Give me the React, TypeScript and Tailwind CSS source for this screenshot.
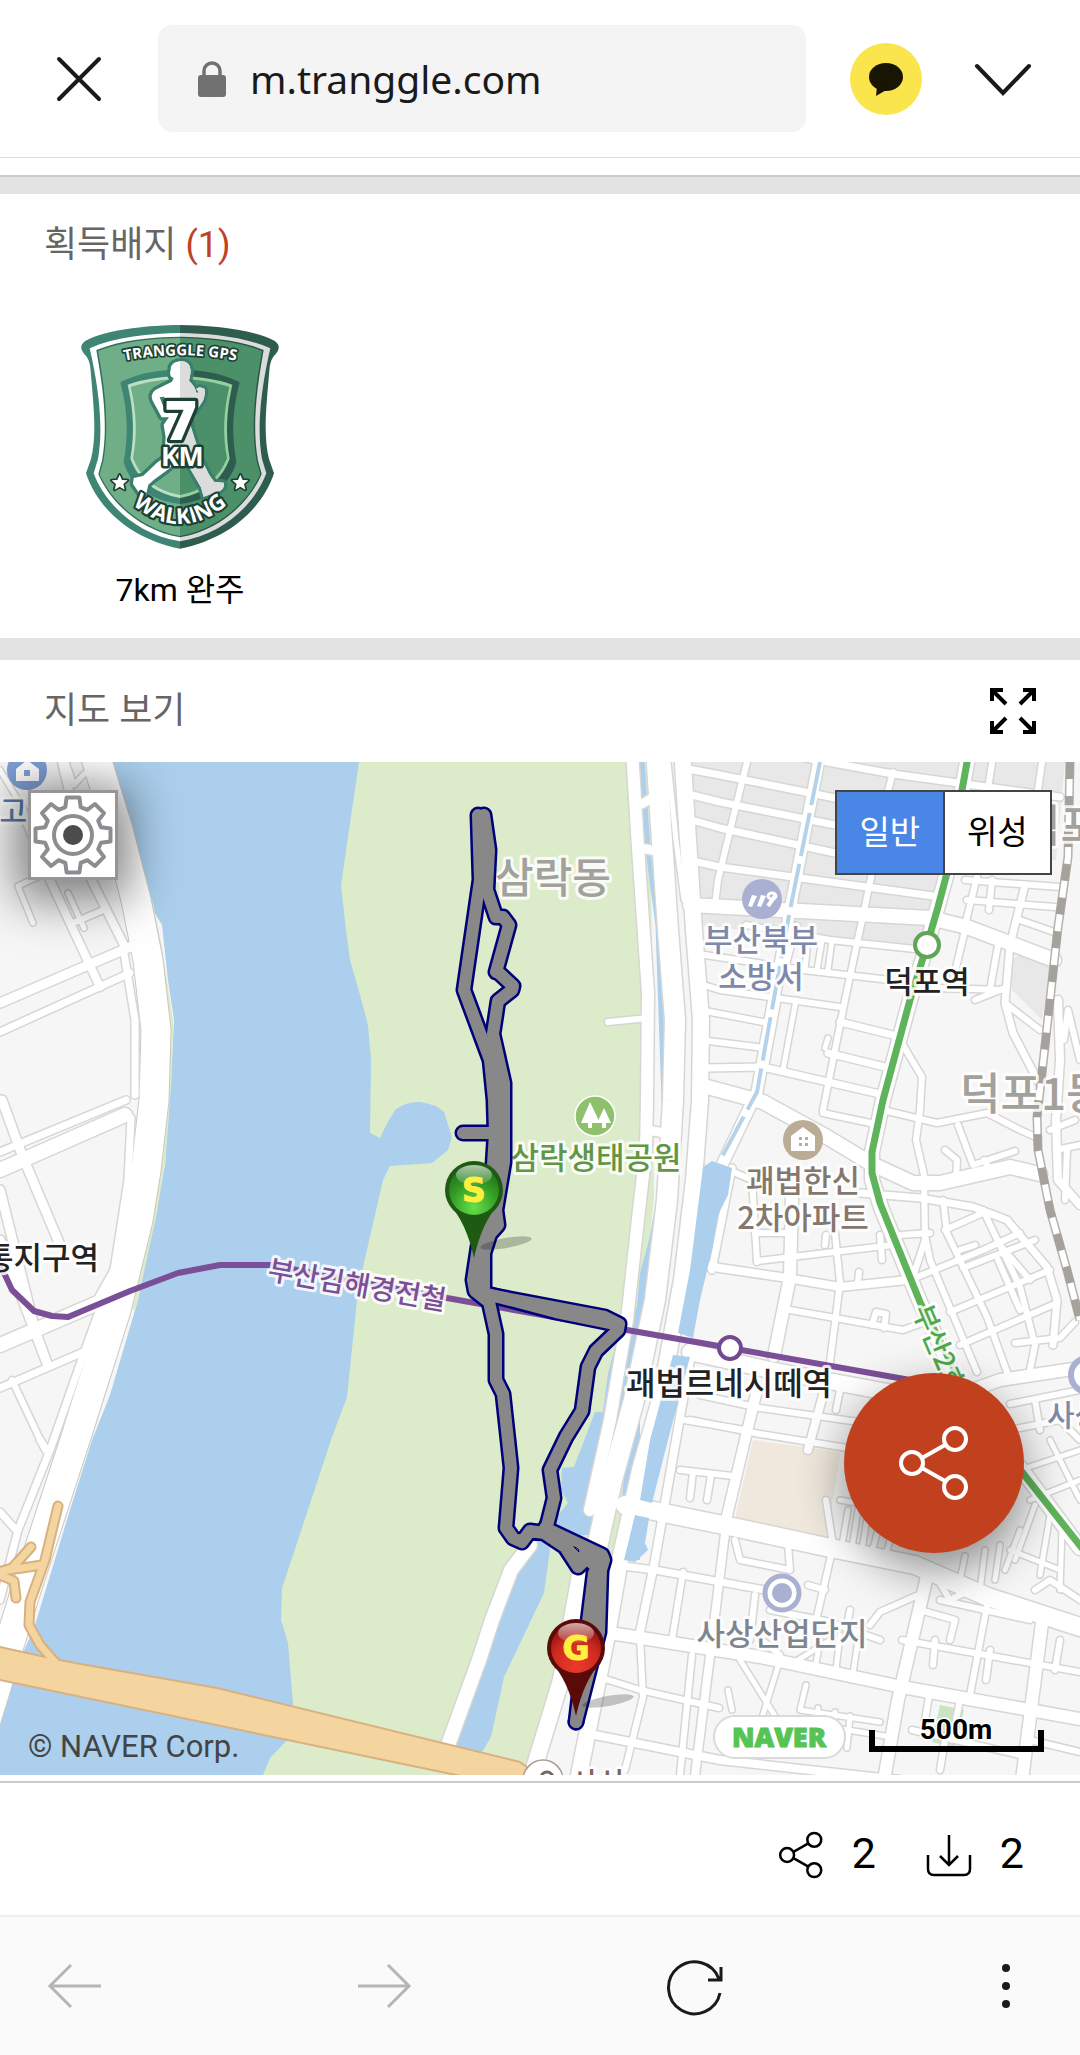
import React from "react";

const KR = "Roboto, 'Noto Sans CJK KR', sans-serif";
const MAP_FONT = "'Noto Sans CJK KR', sans-serif";

type Road = [number, string];

const ROADS: Road[] = [
  // west bank
  [9, "M0 1003L130 947"],
  [7, "M0 1032L130 973"],
  [8, "M22 810L50 880L100 987"],
  [7, "M123 947L135 1020L135 1095"],
  [6, "M73 923L103 910"],
  [8, "M62 762L90 877L123 943"],
  [5, "M33 923L18 886L46 873"],
  [5, "M68 893L84 928M66 762L74 785L84 774M0 770L24 810"],
  [14, "M0 1170L125 1115"],
  [7, "M0 1152L126 1100"],
  [9, "M2 1100L22 1155L60 1245"],
  [9, "M0 1190L35 1330L48 1366L0 1240"],
  [14, "M0 1345L100 1302L118 1270"],
  [7, "M0 1388L88 1350"],
  [6, "M12 1380L45 1450"],
  [7, "M131 1118L128 1180L114 1270L85 1350L50 1450L18 1530L0 1600"],
  [7, "M0 1512L16 1530M40 1440L48 1452"],
  // expressways along the river park
  [12, "M632 750L638 848L648 993L647 1100L646 1150L639 1210L627 1320L610 1420L590 1510"],
  [20, "M656 750L668 930L675 1020L673 1100L667 1200L655 1300L634 1400L612 1480L592 1570L578 1620"],
  [16, "M682 750L694 930L701 1020L700 1100L694 1180L682 1280L660 1400L640 1470L620 1560L606 1640L578 1780"],
  [5, "M668 762L676 840L684 900"],
  [14, "M530 1545L511 1570L492 1620L479 1660L447 1748"],
  [16, "M580 1575L561 1680L532 1775"],
  [6, "M608 1022L648 1018"],
  [9, "M642 804L652 798M640 848L662 852M648 1130L664 1133"],
  // northern blocks
  [7, "M688 769L720 775L835 798"],
  [7, "M800 757L893 774L1060 797"],
  [7, "M692 795L720 802L835 825"],
  [7, "M695 821L720 828L835 853"],
  [7, "M697 862L720 867L933 896"],
  [14, "M690 905L800 911L930 918L967 927L1054 960"],
  [6, "M746 925L830 940L915 949"],
  [6, "M705 955L803 970L890 980"],
  [6, "M700 984L720 990L840 1007"],
  [6, "M700 1010L768 1023"],
  [7, "M840 1022L897 1036"],
  [6, "M700 1040L765 1048"],
  [7, "M828 1053L889 1068"],
  [7, "M705 1068L763 1067L880 1094"],
  [6, "M747 762L735 810L718 880L715 905"],
  [11, "M820 755L790 910L757 1092L722 1165"],
  [6, "M893 772L887 795M872 873L845 1000L823 1110"],
  [14, "M968 757L947 873L927 945L910 1000L883 1100L872 1152L872 1180L882 1210L920 1302L970 1410L1022 1470L1080 1548"],
  [6, "M993 757L987 795M1042 762L1037 797"],
  [6, "M977 877L965 925M992 880L989 910M965 930L953 980M998 945L990 990"],
  [7, "M1025 885L1010 945L1005 1003L1013 1033L1040 1085"],
  [6, "M965 880L1060 887M967 900L1055 907M1020 920L1054 932M935 988L1005 990M975 1000L1005 988M1005 1003L1040 1030"],
  [6, "M900 1040L922 1077L920 1110L916 1140L924 1175L925 1240L912 1280"],
  [5, "M797 925L785 970M808 940L805 970M822 940L817 970M832 940L828 970M778 1000L765 1070M796 1000L783 1070M828 1038L825 1048"],
  [14, "M700 1085L763 1102L827 1137L870 1163L913 1183L940 1183L1010 1167L1040 1174"],
  [6, "M823 1113L875 1124M887 1111L937 1123L987 1113L1020 1130L1038 1138"],
  [6, "M958 1125L973 1165L1015 1151M945 1150L957 1160L956 1178M990 1170L984 1160"],
  [8, "M1058 1000L1060 1060L1056 1120L1058 1180L1080 1205"],
  [6, "M1064 1040L1068 1010L1080 1060M1056 1150L1080 1145M1065 1200L1067 1150M1050 1130L1075 1120"],
  // middle blocks
  [8, "M690 1262L720 1268L787 1278L840 1287L907 1280"],
  [12, "M792 1197L790 1277L774 1356"],
  [7, "M732 1168L712 1270"],
  [6, "M752 1180L757 1262M835 1233L840 1283L830 1362"],
  [6, "M757 1261L893 1245M755 1233L792 1233M722 1167L752 1180"],
  [6, "M790 1310L903 1330L922 1323M872 1325L876 1312L886 1314L884 1328"],
  [6, "M858 1282L859 1272M880 1235L882 1260M826 1235L825 1245"],
  [7, "M860 1193L920 1198L973 1207L1007 1220L1047 1267L1057 1300L1053 1345"],
  [6, "M943 1200L947 1233L987 1317L1007 1372M925 1235L930 1260L977 1372"],
  [6, "M983 1210L1020 1287L1035 1345L1030 1370M998 1260L1020 1310"],
  [6, "M910 1280L983 1250L1020 1233M950 1312L1050 1270M960 1345L1057 1303M1015 1343L1060 1338L1075 1322"],
  [6, "M945 1230L985 1212M900 1235L930 1233M963 1268L1035 1240M960 1250L975 1245M1000 1245L1030 1280"],
  [16, "M690 1352L770 1370L930 1400"],
  [12, "M950 1398L1000 1380L1080 1368"],
  [6, "M1010 1404L1080 1390M1035 1400L1040 1430M1010 1430L1060 1420L1080 1440"],
  [6, "M700 1395L760 1408L880 1425M690 1420L760 1434L860 1450M840 1390L836 1410"],
  [10, "M757 1390L745 1440L726 1520"],
  [8, "M823 1395L808 1450"],
  // industrial district
  [18, "M625 1505L733 1527L826 1547L915 1565L988 1597L1080 1627"],
  [8, "M690 1360L676 1440L655 1560L640 1632"],
  [6, "M680 1470L733 1476M693 1472L690 1498M711 1475L707 1500M684 1420L745 1430"],
  [7, "M615 1565L655 1570L765 1590"],
  [8, "M726 1525L712 1640L695 1775"],
  [6, "M683 1572L672 1640M640 1637L643 1697L625 1770M692 1655L680 1775"],
  [12, "M604 1632L760 1657L902 1687L1080 1719"],
  [6, "M602 1678L640 1690L719 1708M735 1540L740 1560L790 1570L788 1545"],
  [8, "M585 1733L640 1744L720 1760L900 1780"],
  [6, "M833 1547L815 1625M826 1500L833 1545M755 1595L750 1640M762 1640L780 1655M770 1610L830 1622L880 1640"],
  [12, "M928 1572L898 1700L884 1780"],
  [6, "M870 1625L880 1612L925 1592M808 1585L825 1590M850 1610L847 1625"],
  [6, "M988 1600L970 1695M902 1640L1080 1672M935 1575L950 1600L970 1590M935 1640L933 1665M990 1650L986 1680"],
  [12, "M1043 1615L1022 1780"],
  [5, "M740 1660L790 1740M780 1660L755 1740M790 1665L830 1640M820 1640L815 1670M840 1635L836 1670M858 1640L852 1680M728 1690L732 1710M806 1685L800 1710L880 1722M810 1724L885 1736M818 1708L815 1740M835 1712L832 1744M850 1716L847 1748"],
  [5, "M1020 1470L1080 1450M1030 1500L1080 1480M1050 1440L1080 1500M1035 1505L1015 1560M1020 1530L1005 1570M1050 1515L1040 1575M1010 1550L1060 1570M1000 1545L995 1580M985 1550L980 1590M965 1556L958 1590M1062 1530L1060 1590"],
  [6, "M920 1610L955 1620L950 1640M940 1600L1030 1620M1035 1590L1050 1580L1080 1600M1060 1640L1055 1670M930 1690L925 1720M912 1730L1020 1755M940 1770L945 1740M1030 1740L1080 1752M960 1700L952 1740"],
  [5, "M840 1500L868 1505M848 1510L842 1545M858 1510L852 1548M868 1512L862 1550M878 1530L872 1552M890 1540L886 1555"],
];

const LEVEE_ROAD =
  "M95 755L118 830L136 900L148 960L156 1030L154 1100L146 1170L138 1220L116 1310L75 1440L26 1590L-14 1720";

const RAMPS =
  "M58 1506L45 1560L30 1602L29 1625L40 1645L55 1662M31 1547L12 1568L-5 1573L14 1581L16 1598M42 1565L-5 1572";

const RAILWAY = "M1070 762L1068 857L1058 927L1042 1073L1037 1117L1038 1150L1050 1210L1067 1270L1080 1320";

const ROUTE = [
  "M478 815L480 880L464 990L490 1060L494 1100L495 1133L493 1165L478 1247L473 1280L475 1291L489 1302L496 1334L496 1380L503 1394L508 1440L511 1468L506 1528L513 1538L522 1542L530 1531L544 1533L565 1547L578 1567L592 1553",
  "M484 815L489 850L487 890L496 917L503 917L509 925L496 972L499 973L513 986L512 990L498 1001L493 1034L504 1083L504 1162L496 1210L498 1225L490 1234L484 1253L484 1294L605 1317L619 1324L618 1330L596 1351L588 1367L582 1411L566 1437L550 1470L554 1498L548 1522L545 1532",
  "M463 1133L494 1133",
  "M476 1291L556 1312L615 1324",
  "M545 1528L602 1555L604 1560L601 1570L599 1632L576 1722",
  "M594 1573L587 1630L576 1722",
];

const ROUTE_FILL =
  "M478 815L484 815L489 850L487 890L480 893ZM490 1058L494 1036L504 1083L504 1160L496 1210L498 1225L490 1235L484 1253L484 1294L475 1290L473 1280L478 1247L494 1160ZM484 1292L605 1317L619 1324L556 1312ZM545 1528L602 1553L601 1572L599 1632L576 1722L587 1630L594 1573L580 1560L565 1550Z";

function MapLabel({
  x,
  y,
  size = 30,
  fill,
  anchor = "middle",
  weight = 500,
  transform,
  children,
}: {
  x: number;
  y: number;
  size?: number;
  fill: string;
  anchor?: "start" | "middle" | "end";
  weight?: number;
  transform?: string;
  children: React.ReactNode;
}) {
  return (
    <text
      x={x}
      y={y}
      fontSize={size}
      fontWeight={weight}
      fontFamily={MAP_FONT}
      fill={fill}
      textAnchor={anchor}
      stroke="#fff"
      strokeOpacity={0.85}
      strokeWidth={6}
      strokeLinejoin="round"
      paintOrder="stroke"
      transform={transform}
    >
      {children}
    </text>
  );
}

function Pin({ x, y, tone, letter }: { x: number; y: number; tone: "start" | "goal"; letter: string }) {
  const dark = tone === "start" ? "#1f5a12" : "#5a0a08";
  return (
    <g transform={`translate(${x} ${y})`}>
      <ellipse cx="32" cy="53" rx="26" ry="5" fill="#000" opacity="0.22" transform="rotate(-10 32 53)" />
      <path d="M-25 14Q-8 32 0 68Q8 32 25 14Z" fill={dark} />
      <circle r="29" fill={dark} />
      <circle r="25" fill={`url(#pin-${tone})`} />
      <ellipse cy="-15" rx="18" ry="10" fill="url(#pin-gloss)" />
      <text
        y="12"
        textAnchor="middle"
        fontFamily="'DejaVu Sans', sans-serif"
        fontWeight="700"
        fontSize="33"
        fill="#ffef3e"
        stroke="#ffef3e"
        strokeWidth="1"
      >
        {letter}
      </text>
    </g>
  );
}

function TrackMap() {
  return (
    <svg viewBox="0 762 1080 1013" className="block h-auto w-full" role="img" aria-label="트랙 지도">
      <defs>
        <radialGradient id="pin-start" cx="0.5" cy="0.85" r="0.8">
          <stop offset="0" stopColor="#66e04c" />
          <stop offset="0.6" stopColor="#339c26" />
          <stop offset="1" stopColor="#216f18" />
        </radialGradient>
        <radialGradient id="pin-goal" cx="0.5" cy="0.85" r="0.8">
          <stop offset="0" stopColor="#e83a2a" />
          <stop offset="0.6" stopColor="#d02a20" />
          <stop offset="1" stopColor="#8a1410" />
        </radialGradient>
        <linearGradient id="pin-gloss" x1="0" y1="0" x2="0" y2="1">
          <stop offset="0" stopColor="#fff" stopOpacity="0.65" />
          <stop offset="1" stopColor="#fff" stopOpacity="0.1" />
        </linearGradient>
      </defs>

      <rect y="762" width="1080" height="1013" fill="#f6f6f6" />
      <path d="M685 762H1065L1056 860L945 870L935 948L690 925Z" fill="#e8e8e8" />
      <path d="M1030 945L1052 960L1042 1020L1012 990L1012 960Z" fill="#e8e8e8" />
      <path d="M753 1440L841 1452L826 1538L735 1518Z" fill="#f0e8dd" />
      <path d="M940 1705L964 1710L955 1748L932 1742Z" fill="#cbe3c1" />
      <path
        d="M111 762L125 806L150 905L162 925L168 980L174 1020L172 1060L168 1100L165 1165L155 1215L138 1300L110 1395L92 1440L70 1510L35 1625L20 1660L0 1715V1775H640V762Z"
        fill="#abcfed"
      />
      <path
        d="M359 762L341 885L346 930L350 960L360 995L368 1025L371 1060L370 1133L380 1138Q388 1120 396 1109Q408 1101 420 1102Q436 1104 444 1112L452 1137L448 1150L432 1163L390 1166L383 1180L363 1267L357 1300L347 1397L331 1440L298 1540L282 1588L281 1620L288 1643L293 1703L292 1735L270 1758L263 1775H600L630 1400L654 1200L650 762Z"
        fill="#dcebc9"
      />
      <path
        d="M657 1150L658 1190L649 1240L640 1273L637 1307L617 1340L608 1373L603 1412L595 1412L574 1467L562 1468L561 1490L568 1503L554 1520L544 1593L504 1677L491 1737L482 1752L445 1746L480 1660L512 1570L540 1535L600 1535L665 1300L668 1150Z"
        fill="#abcfed"
      />
      <path d="M642 762L648 850L658 925L664 1100" fill="none" stroke="#abcfed" strokeWidth="5" />
      <path d="M600 1560H760V1775H530Z" fill="#f6f6f6" />
      <path d="M112 764L152 905L160 945L172 1023L170 1080L164 1160L155 1215L134 1310" fill="none" stroke="#dcebc9" strokeWidth="3" />

      <path d={LEVEE_ROAD} fill="none" stroke="#c9c9c4" strokeWidth="31" />
      {ROADS.map(([w, d], i) => (
        <path key={i} d={d} fill="none" stroke="#d6d6d4" strokeWidth={w + 3} strokeLinecap="round" strokeLinejoin="round" />
      ))}
      <path d={LEVEE_ROAD} fill="none" stroke="#fff" strokeWidth="29" />
      {ROADS.map(([w, d], i) => (
        <path key={i} d={d} fill="none" stroke="#fff" strokeWidth={w} strokeLinecap="round" strokeLinejoin="round" />
      ))}

      <g fill="#abcfed">
        <path d="M703 1167L712 1161L732 1168L728 1195L718 1215L712 1250L700 1300L693 1338L678 1333L690 1270Z" />
        <path d="M673 1355L690 1357L668 1440L652 1503L640 1500L650 1440Z" />
        <path d="M635 1515L649 1518L645 1543L648 1550L635 1562L624 1560Z" />
      </g>
      <path
        d="M820 762L790 910L757 1092L722 1157"
        fill="none"
        stroke="#b4d2ea"
        strokeWidth="4"
        strokeDasharray="44 8"
      />

      <g fill="none" strokeLinejoin="round">
        <path d={RAMPS} stroke="#d9b07f" strokeWidth="11" strokeLinecap="round" />
        <path d="M-5 1646L50 1658L75 1663L217 1688L520 1762L545 1780H480L-5 1679Z" fill="#f4d5a0" stroke="#d9b07f" strokeWidth="2" />
        <path d={RAMPS} stroke="#f4d5a0" strokeWidth="7" strokeLinecap="round" />
      </g>

      <g fill="none">
        <path d={RAILWAY} stroke="#b5b1ac" strokeWidth="9" />
        <path d={RAILWAY} stroke="#fff" strokeWidth="6" />
        <path d={RAILWAY} stroke="#a5a19b" strokeWidth="8" strokeDasharray="17 17" />
      </g>

      <g fill="none" strokeLinejoin="round">
        <path
          d="M968 757L962 790L947 873L938 907L927 945L910 1000L883 1100L872 1152L872 1173L880 1203L920 1302L970 1400L1022 1472L1085 1552"
          stroke="#5fb35a"
          strokeWidth="7"
        />
        <path
          d="M-5 1260L5 1275L12 1290L34 1311L52 1316L68 1317L130 1291L178 1273L220 1265H270L447 1298L627 1330L730 1348L910 1380"
          stroke="#7b4f98"
          strokeWidth="6"
        />
      </g>
      <circle cx="927" cy="945" r="12" fill="#fff" stroke="#5fa557" strokeWidth="4" />
      <circle cx="730" cy="1348" r="11" fill="#fff" stroke="#74498f" strokeWidth="4" />

      <g strokeWidth="1.5">
        <circle cx="27" cy="770" r="20" fill="#7f9fd6" />
        <path d="M16 769L27 760L39 769V781H16Z" fill="#fff" />
        <rect x="24" y="770" width="6" height="6" fill="#7f9fd6" />
        <circle cx="762" cy="899" r="20" fill="#aab0d1" />
        <path d="M752 895l5 1l-5 11l-4 -1zM761 895l5 1l-5 11l-4 -1z" fill="#fff" />
        <path d="M768 906L775 896" stroke="#fff" strokeWidth="4" />
        <ellipse cx="772" cy="896" rx="4" ry="3" fill="none" stroke="#fff" strokeWidth="3" />
        <circle cx="595" cy="1116" r="20" fill="#8fc16c" stroke="#fff" />
        <path d="M590 1102L600 1123H592V1128H588V1123H581Z" fill="#fff" />
        <path d="M604 1108L611 1123H606V1128H602V1123H597Z" fill="#fff" />
        <circle cx="803" cy="1140" r="20" fill="#bbac95" />
        <path d="M791 1136L803 1127L815 1136V1151H791Z" fill="#fff" />
        <path d="M799 1137h3v3h-3zM805 1137h3v3h-3zM799 1143h3v3h-3zM805 1143h3v3h-3z" fill="#bbac95" />
        <circle cx="782" cy="1593" r="17" fill="#fff" stroke="#aab0d1" strokeWidth="5" />
        <circle cx="782" cy="1593" r="10" fill="#aab0d1" />
        <circle cx="1088" cy="1375" r="17" fill="#fff" stroke="#aab0d1" strokeWidth="6" />
        <circle cx="543" cy="1780" r="20" fill="#fff" stroke="#a89d93" />
        <circle cx="547" cy="1778" r="6" fill="none" stroke="#77675c" strokeWidth="3" />
      </g>

      <MapLabel x={27} y={822} fill="#5b7bab" anchor="end">고</MapLabel>
      <MapLabel x={553} y={893} size={42} fill="#a3a19b">삼락동</MapLabel>
      <MapLabel x={1020} y={842} size={44} fill="#a3a19b" anchor="start">덕포</MapLabel>
      <MapLabel x={960} y={1110} size={44} fill="#a3a19b" anchor="start">덕포1동</MapLabel>
      <MapLabel x={761} y={951} size={31} fill="#7e88a8">부산북부</MapLabel>
      <MapLabel x={761} y={988} size={31} fill="#7e88a8">소방서</MapLabel>
      <MapLabel x={927} y={993} size={31} fill="#222">덕포역</MapLabel>
      <MapLabel x={596} y={1169} size={31} fill="#619645">삼락생태공원</MapLabel>
      <MapLabel x={803} y={1192} size={31} fill="#84776d">괘법한신</MapLabel>
      <MapLabel x={803} y={1229} size={31} fill="#84776d">2차아파트</MapLabel>
      <MapLabel x={99} y={1269} size={31} fill="#222" anchor="end">통지구역</MapLabel>
      <MapLabel x={729} y={1395} size={32} fill="#222">괘법르네시떼역</MapLabel>
      <MapLabel x={782} y={1645} size={31} fill="#7d858e">사상산업단지</MapLabel>
      <MapLabel x={1047} y={1426} fill="#7e88a8" anchor="start">사상</MapLabel>
      <MapLabel x={598} y={1794} fill="#77675c">사상</MapLabel>
      <MapLabel x={357} y={1295} size={28} fill="#7b4f98" transform="rotate(10 357 1286)">부산김해경전철</MapLabel>
      <MapLabel x={912} y={1310} size={28} fill="#4fa84c" anchor="start" transform="rotate(67 912 1310)">부산2호선</MapLabel>

      <g fill="none" strokeLinejoin="round" strokeLinecap="round">
        {ROUTE.map((d, i) => (
          <path key={i} d={d} stroke="#00007a" strokeWidth="17" />
        ))}
        {ROUTE.map((d, i) => (
          <path key={i} d={d} stroke="#888" strokeWidth="12" />
        ))}
        <path d={ROUTE_FILL} fill="#888" />
        <path d="M574 1547L579 1552L578 1549Z" stroke="#00007a" strokeWidth="1" />
      </g>

      <Pin x={474} y={1190} tone="start" letter="S" />
      <Pin x={576} y={1648} tone="goal" letter="G" />

      <rect x="714" y="1716" width="131" height="42" rx="21" fill="#fff" stroke="#dadada" strokeWidth="2" />
      <text x="779" y="1747" textAnchor="middle" fontFamily="'Open Sans', sans-serif" fontWeight="800" fontSize="27" fill="#55c455" stroke="#55c455" strokeWidth="1">
        NAVER
      </text>
      <path d="M872 1730V1749H1041V1730" fill="none" stroke="#000" strokeWidth="6" />
      <text x="956" y="1739" textAnchor="middle" fontFamily="Roboto, sans-serif" fontWeight="700" fontSize="28" stroke="#fff" strokeWidth="3" paintOrder="stroke">
        500m
      </text>
      <text x="28" y="1757" fontFamily="Roboto, sans-serif" fontSize="31" fill="#444">
        © NAVER Corp.
      </text>
    </svg>
  );
}

const SHIELD = {
  outer: "M419 73C330 74 205 84 136 120C119 132 119 143 132 160C144 172 148 185 150 200C160 320 170 400 152 475L137 518C170 620 270 715 419 744Z",
  band: "M419 97C330 98 225 108 148 143C175 260 190 380 173 475L160 518C190 600 280 700 419 722Z",
  line: "M419 108C335 109 240 118 168 148C190 270 203 380 185 480L174 520C205 595 290 688 419 710Z",
  field: "M419 112C337 113 245 122 173 151C195 270 207 380 189 481L178 521C209 592 292 684 419 706Z",
  ring: "M419 207C350 208 290 218 240 245C262 330 265 400 250 485C270 555 335 602 419 610Z",
  glow: "M419 226C365 227 305 236 262 252C280 330 283 400 270 474C295 540 345 578 419 592Z",
  core: "M419 234C368 235 315 244 271 259C288 330 292 400 278 472C302 534 350 570 419 583Z",
};

function ShieldHalf({ colors }: { colors: [string, string, string, string, string] }) {
  const [edge, band, line, field, glow] = colors;
  return (
    <>
      <path d={SHIELD.outer} fill={edge} />
      <path d={SHIELD.band} fill={band} />
      <path d={SHIELD.line} fill={line} />
      <path d={SHIELD.field} fill={field} />
      <path d={SHIELD.ring} fill={edge} />
      <path d={SHIELD.glow} fill={glow} />
      <path d={SHIELD.core} fill={field} />
    </>
  );
}

const WALKER =
  "M400 232C385 228 390 214 391 205C392 188 408 181 426 182C446 184 453 200 450 220L446 240C455 250 464 258 468 276L476 276L468 264L478 260L492 264Q496 280 488 300L468 330L452 345L452 380L468 430L482 475L508 525L522 544L550 546Q554 560 540 570L490 588L482 560L450 505L422 465L385 505L340 538L324 552L318 578L300 582L278 550L280 532L308 526L350 486L372 470L376 410L370 372L386 350L364 350L336 298Q330 280 345 268L395 243ZM372 288L358 290L374 330L378 310Z";

const STAR = "M0-24L7-8L24-7L11 4L15 21L0 12L-15 21L-11 4L-24-7L-7-8Z";

function WalkingBadge() {
  return (
    <svg viewBox="119 70 600 678" className="h-[226px] w-[200px]" role="img" aria-label="7km 배지">
      <defs>
        <clipPath id="walker-right">
          <rect x="419" y="100" width="300" height="600" />
        </clipPath>
        <path id="badge-top" d="M250 181Q419 147 590 181" />
        <path id="badge-bottom" d="M246 584Q419 756 592 584" />
      </defs>
      <ShieldHalf colors={["#3f8574", "#ffffff", "#2f6f5c", "#70ae87", "#b9e0c0"]} />
      <g transform="translate(838 0) scale(-1 1)">
        <ShieldHalf colors={["#2e5d50", "#dcdcdc", "#2a5647", "#4b9069", "#93cf9f"]} />
      </g>
      <path d={WALKER} fill="#3a7f6c" stroke="#3a7f6c" strokeWidth="20" strokeLinejoin="round" fillRule="evenodd" />
      <path d={WALKER} fill="#fff" fillRule="evenodd" />
      <path d={WALKER} fill="#dcdcdc" fillRule="evenodd" clipPath="url(#walker-right)" />
      <g
        fontFamily="'Open Sans', sans-serif"
        fontWeight="800"
        fill="#fff"
        stroke="#1d4034"
        strokeLinejoin="round"
        textAnchor="middle"
        paintOrder="stroke"
      >
        <text x="421" y="418" fontSize="166" strokeWidth="20">7</text>
        <text x="426" y="495" fontSize="80" fontWeight="700" strokeWidth="15">KM</text>
        <text fontSize="45" fontWeight="700" strokeWidth="10">
          <textPath href="#badge-top" startOffset="50%">TRANGGLE GPS</textPath>
        </text>
        <text fontSize="66" fontWeight="700" strokeWidth="13">
          <textPath href="#badge-bottom" startOffset="50%">WALKING</textPath>
        </text>
        <path d={STAR} strokeWidth="10" transform="translate(238 546)" />
        <path d={STAR} strokeWidth="10" transform="translate(600 546)" />
      </g>
    </svg>
  );
}

function gearPath() {
  const pts: string[] = [];
  const steps: [number, number][] = [
    [-0.27, 29],
    [-0.17, 38],
    [0.17, 38],
    [0.27, 29],
  ];
  for (let i = 0; i < 8; i++) {
    const base = (i * 45 - 90) * (Math.PI / 180);
    for (const [da, r] of steps) {
      pts.push(`${(r * Math.cos(base + da)).toFixed(1)} ${(r * Math.sin(base + da)).toFixed(1)}`);
    }
  }
  return `M${pts.join("L")}Z`;
}

function ShareIcon({ className, strokeWidth }: { className: string; strokeWidth: number }) {
  return (
    <svg viewBox="0 0 72 76" className={className} fill="none" stroke="currentColor" strokeWidth={strokeWidth} aria-hidden="true">
      <circle cx="14" cy="38" r="11" />
      <circle cx="57" cy="14" r="11" />
      <circle cx="57" cy="62" r="11" />
      <path d="M24 33L47 20M24 43L47 56" />
    </svg>
  );
}

export default function App() {
  const [mode, setMode] = React.useState<"일반" | "위성">("일반");
  return (
    <div className="flex min-h-screen flex-col bg-white text-black" style={{ fontFamily: KR }}>
      <header className="flex h-[158px] items-center border-b border-[#dedede] pr-12 pl-14">
        <button aria-label="닫기" className="shrink-0">
          <svg viewBox="0 0 46 46" className="size-[46px]" fill="none" stroke="#1a1a1a" strokeWidth="4" strokeLinecap="round">
            <path d="M3 3L43 43M43 3L3 43" />
          </svg>
        </button>
        <label className="ml-14 flex h-[107px] flex-1 items-center gap-6 rounded-[14px] bg-[#f4f4f4] pl-10">
          <svg viewBox="0 0 28 36" className="h-9 w-7" aria-hidden="true">
            <path d="M6 15V10a8 8 0 0 1 16 0v5" fill="none" stroke="#717171" strokeWidth="3.5" />
            <rect y="14" width="28" height="22" rx="3" fill="#717171" />
          </svg>
          <input
            aria-label="주소"
            readOnly
            value="m.tranggle.com"
            className="min-w-0 flex-1 bg-transparent pt-0.5 font-['Noto_Sans'] text-[39px] text-[#1a1a1a] outline-none"
          />
        </label>
        <button aria-label="카카오톡 공유" className="ml-11 flex size-[72px] shrink-0 items-center justify-center rounded-full bg-[#fae54d]">
          <svg viewBox="0 0 34 34" className="size-[34px]" aria-hidden="true">
            <ellipse cx="17" cy="15" rx="17" ry="14" fill="#181602" />
            <path d="M8 24L7 34L19 27Z" fill="#181602" />
          </svg>
        </button>
        <button aria-label="더 보기" className="ml-[52px] shrink-0">
          <svg viewBox="0 0 58 34" className="h-[34px] w-[58px]" fill="none" stroke="#1a1a1a" strokeWidth="4" strokeLinecap="round">
            <path d="M3 4L29 31L55 4" />
          </svg>
        </button>
      </header>

      <main className="flex-1">
        <div className="mt-[17px] h-[19px] border-t-2 border-[#cbcbcb] bg-[#e3e3e3]" />
        <section className="px-11 pt-[25px] pb-7">
          <h2 className="text-[36px] leading-[52px] text-[#666]">
            획득배지 <span className="text-[#c0411f]">(1)</span>
          </h2>
          <figure className="mt-[53px] ml-9 flex w-[200px] flex-col items-center">
            <WalkingBadge />
            <figcaption className="mt-5 text-[32px] leading-[40px]">7km 완주</figcaption>
          </figure>
        </section>

        <div className="h-[22px] bg-[#e3e3e3]" />
        <section className="border-b-2 border-[#cbcbcb] pb-[6px]">
          <div className="flex h-[102px] items-center justify-between px-11">
            <h2 className="text-[36px] leading-[52px] text-[#666]">지도 보기</h2>
            <button aria-label="전체 화면">
              <svg viewBox="0 0 46 46" className="size-[46px]" fill="none" stroke="#000" strokeWidth="4">
                <path d="M13 2H2V13M2 2L16 16M33 2H44V13M44 2L30 16M13 44H2V33M2 44L16 30M33 44H44V33M44 44L30 30" />
              </svg>
            </button>
          </div>
          <div className="relative overflow-hidden">
            <TrackMap />
            <button
              aria-label="설정"
              className="absolute top-7 left-7 flex size-[90px] items-center justify-center border-[3px] border-[#989395] bg-white shadow-[0_8px_48px_12px_rgba(0,0,0,0.5)]"
            >
              <svg viewBox="-42 -42 84 84" className="size-[84px]" fill="none" stroke="#8b8d90" strokeWidth="4" aria-hidden="true">
                <path d={gearPath()} strokeLinejoin="round" />
                <circle r="19" />
                <circle r="10" fill="#4c4c4e" stroke="none" />
              </svg>
            </button>
            <div className="absolute top-7 right-7 flex h-[85px] w-[217px] border-2 border-[#444] bg-white text-[33px]">
              {(["일반", "위성"] as const).map((name) => (
                <button
                  key={name}
                  aria-pressed={mode === name}
                  onClick={() => setMode(name)}
                  className={
                    mode === name
                      ? "flex-1 bg-[#4a86e6] text-white"
                      : "flex-1 border-l-2 border-[#444] bg-white text-black"
                  }
                >
                  {name}
                </button>
              ))}
            </div>
            <button
              aria-label="공유하기"
              className="absolute right-14 bottom-[222px] flex size-[180px] items-center justify-center rounded-full bg-[#c1411e] text-white shadow-[0_18px_48px_rgba(0,0,0,0.45)]"
            >
              <ShareIcon className="h-[76px] w-[72px]" strokeWidth={4} />
            </button>
          </div>
        </section>

        <div className="flex h-[132px] items-center justify-end gap-[50px] pt-3 pr-14 text-[43px]">
          <button aria-label="공유 2" className="flex items-center gap-7">
            <ShareIcon className="h-[48px] w-[46px]" strokeWidth={4} />
            <span className="pb-1 leading-none">2</span>
          </button>
          <button aria-label="다운로드 2" className="flex items-center gap-7">
            <svg viewBox="0 0 46 44" className="h-11 w-[46px]" fill="none" stroke="#000" strokeWidth="2.5" aria-hidden="true">
              <path d="M2 22V36Q2 42 8 42H38Q44 42 44 36V22M23 2V31M14 23L23 32L32 23" />
            </svg>
            <span className="pb-1 leading-none">2</span>
          </button>
        </div>
      </main>

      <nav className="flex h-[140px] items-center justify-between border-t-2 border-[#eee] bg-[#fafafa] px-11">
        <button aria-label="뒤로" className="flex w-[60px] justify-center">
          <svg viewBox="0 0 54 46" className="h-[46px] w-[54px]" fill="none" stroke="#b5b5b5" strokeWidth="3">
            <path d="M54 23H3M24 2L3 23L24 44" />
          </svg>
        </button>
        <button aria-label="앞으로" className="flex w-[60px] justify-center">
          <svg viewBox="0 0 54 46" className="h-[46px] w-[54px]" fill="none" stroke="#b5b5b5" strokeWidth="3">
            <path d="M0 23H51M30 2L51 23L30 44" />
          </svg>
        </button>
        <button aria-label="새로고침" className="flex w-[60px] justify-center">
          <svg viewBox="0 0 60 60" className="size-[60px]" fill="none" stroke="#1a1a1a" strokeWidth="3">
            <path d="M55 37A26 26 0 1 1 54 23M56 11V24H43" />
          </svg>
        </button>
        <button aria-label="메뉴" className="flex w-[60px] justify-center">
          <svg viewBox="0 0 12 46" className="h-[46px] w-3" fill="#1a1a1a">
            <circle cx="6" cy="5" r="4" />
            <circle cx="6" cy="23" r="4" />
            <circle cx="6" cy="41" r="4" />
          </svg>
        </button>
      </nav>
    </div>
  );
}
